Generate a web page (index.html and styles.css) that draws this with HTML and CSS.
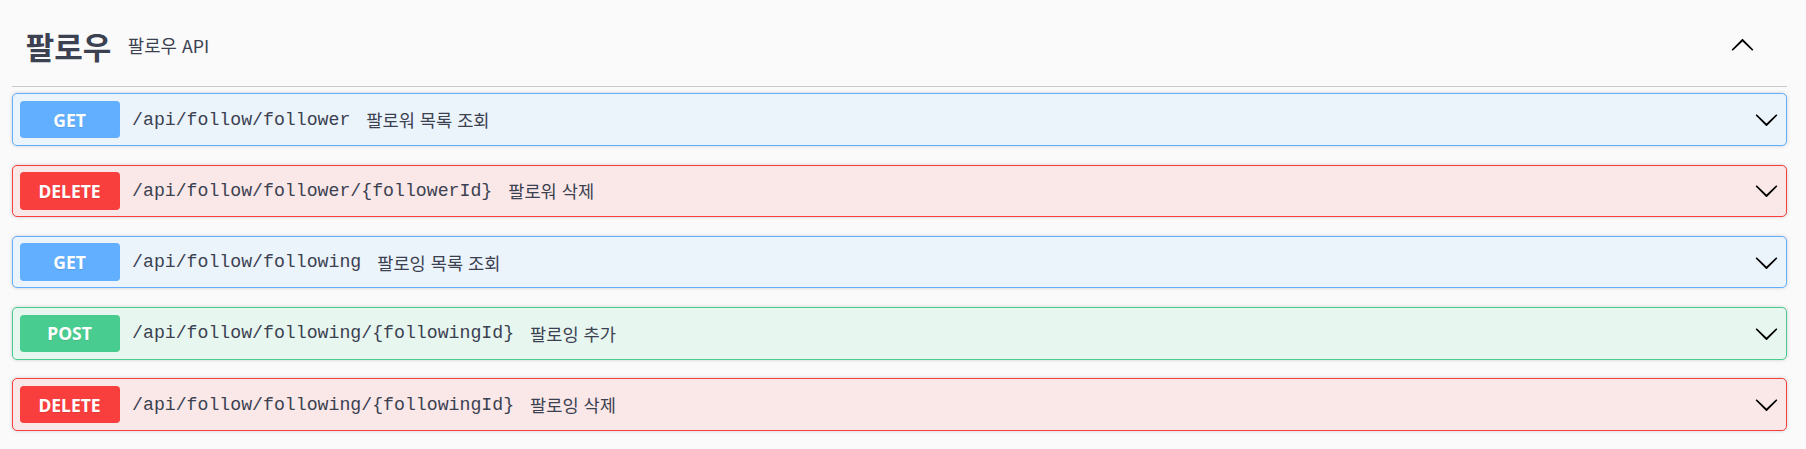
FILE: index.html
```html
<!DOCTYPE html>
<html lang="ko">
<head>
<meta charset="utf-8">
<title>팔로우 API</title>
<link rel="stylesheet" href="styles.css">
</head>
<body>
<div class="section">
  <div class="tag">
    <h3 class="tag-title">팔로우</h3>
    <span class="tag-desc">팔로우 API</span>
    <svg class="tag-arrow" viewBox="0 0 20 20" width="25" height="25"><path d="M2.582 13.891c-.272.268-.709.268-.979 0s-.271-.701 0-.969l7.908-7.83c.27-.268.707-.268.979 0l7.908 7.83c.27.268.27.701 0 .969-.271.268-.709.268-.979 0L10 6.750l-7.418 7.141z"/></svg>
  </div>

  <div class="opblock get">
    <span class="method">GET</span>
    <span class="path">/api/follow/follower</span>
    <span class="desc">팔로워 목록 조회</span>
    <svg class="arrow" viewBox="0 0 20 20" width="25" height="25"><path d="M17.418 6.109c.272-.268.709-.268.979 0s.271.701 0 .969l-7.908 7.83c-.27.268-.707.268-.979 0l-7.908-7.830c-.27-.268-.27-.701 0-.969.271-.268.709-.268.979 0L10 13.25l7.418-7.141z"/></svg>
  </div>

  <div class="opblock delete">
    <span class="method">DELETE</span>
    <span class="path">/api/follow/follower/{followerId}</span>
    <span class="desc">팔로워 삭제</span>
    <svg class="arrow" viewBox="0 0 20 20" width="25" height="25"><path d="M17.418 6.109c.272-.268.709-.268.979 0s.271.701 0 .969l-7.908 7.83c-.27.268-.707.268-.979 0l-7.908-7.830c-.27-.268-.27-.701 0-.969.271-.268.709-.268.979 0L10 13.25l7.418-7.141z"/></svg>
  </div>

  <div class="opblock get">
    <span class="method">GET</span>
    <span class="path">/api/follow/following</span>
    <span class="desc">팔로잉 목록 조회</span>
    <svg class="arrow" viewBox="0 0 20 20" width="25" height="25"><path d="M17.418 6.109c.272-.268.709-.268.979 0s.271.701 0 .969l-7.908 7.83c-.27.268-.707.268-.979 0l-7.908-7.830c-.27-.268-.27-.701 0-.969.271-.268.709-.268.979 0L10 13.25l7.418-7.141z"/></svg>
  </div>

  <div class="opblock post">
    <span class="method">POST</span>
    <span class="path">/api/follow/following/{followingId}</span>
    <span class="desc">팔로잉 추가</span>
    <svg class="arrow" viewBox="0 0 20 20" width="25" height="25"><path d="M17.418 6.109c.272-.268.709-.268.979 0s.271.701 0 .969l-7.908 7.83c-.27.268-.707.268-.979 0l-7.908-7.830c-.27-.268-.27-.701 0-.969.271-.268.709-.268.979 0L10 13.25l7.418-7.141z"/></svg>
  </div>

  <div class="opblock delete">
    <span class="method">DELETE</span>
    <span class="path">/api/follow/following/{followingId}</span>
    <span class="desc">팔로잉 삭제</span>
    <svg class="arrow" viewBox="0 0 20 20" width="25" height="25"><path d="M17.418 6.109c.272-.268.709-.268.979 0s.271.701 0 .969l-7.908 7.83c-.27.268-.707.268-.979 0l-7.908-7.830c-.27-.268-.27-.701 0-.969.271-.268.709-.268.979 0L10 13.25l7.418-7.141z"/></svg>
  </div>
</div>
</body>
</html>
```

FILE: styles.css
```css
html, body {
  margin: 0;
  padding: 0;
  background: #fafafa;
  color: #3b4151;
  font-family: "Noto Sans", "Noto Sans CJK KR", sans-serif;
}

.section {
  padding: 0 19.3px 0 12.3px;
}

.tag {
  display: flex;
  align-items: center;
  height: 81px;
  padding: 5px 32px 0 13.5px;
  border-bottom: 1px solid #c9cacd;
  margin-bottom: 6.3px;
}

.tag-title {
  margin: 0;
  font-family: "Noto Sans CJK KR", sans-serif;
  font-size: 31px;
  font-weight: 700;
  line-height: 1;
  color: #3b4151;
}

.tag-desc {
  flex: 1;
  margin-left: 16.5px;
  font-family: "Noto Sans CJK KR", sans-serif;
  font-size: 17.8px;
  font-weight: 400;
  line-height: 1;
  color: #3b4151;
}

.tag-arrow {
  fill: #000;
  display: block;
}

.opblock {
  display: flex;
  align-items: center;
  box-sizing: border-box;
  height: 52.5px;
  padding: 0 6.5px 0 6.25px;
  margin-bottom: 18.75px;
  border: 1px solid;
  border-radius: 5px;
  box-shadow: 0 0 3.75px rgba(0, 0, 0, 0.19);
}

.opblock.get {
  background: #ebf3fb;
  border-color: #61affe;
}
.opblock.get .method { background: #61affe; }

.opblock.delete {
  background: #fae7e7;
  border-color: #f93e3e;
}
.opblock.delete .method { background: #f93e3e; }

.opblock.post {
  background: #e8f6f0;
  border-color: #49cc90;
}
.opblock.post .method { background: #49cc90; }

.method {
  flex: none;
  width: 100px;
  height: 37.5px;
  display: flex;
  align-items: center;
  justify-content: center;
  border-radius: 3.75px;
  color: #fff;
  font-family: "Noto Sans", sans-serif;
  font-weight: 700;
  font-size: 17.5px;
  text-shadow: 0 1px 0 rgba(0, 0, 0, 0.1);
}

.path {
  padding: 0 12.5px;
  font-family: "Liberation Mono", "Noto Sans CJK KR", monospace;
  font-size: 18.2px;
  color: #3b4151;
}

.desc {
  flex: 1;
  margin-left: 3.5px;
  font-family: "Noto Sans CJK KR", sans-serif;
  font-size: 17.6px;
  color: #3b4151;
}

.arrow {
  flex: none;
  display: block;
  fill: #000;
}
```
